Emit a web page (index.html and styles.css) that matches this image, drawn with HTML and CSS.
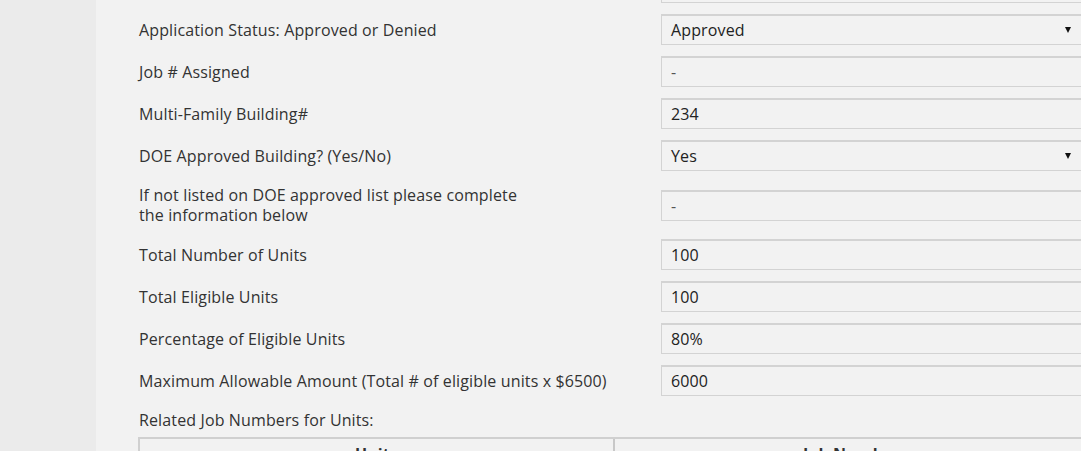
FILE: index.html
```html
<!DOCTYPE html>
<html lang="en">
<head>
<meta charset="utf-8">
<title>Application</title>
<link rel="stylesheet" href="styles.css">
</head>
<body>
<div class="page">
  <aside class="sidebar"></aside>
  <main class="panel">
    <div class="form">
      <div class="row top-row">
        <div class="label"></div>
        <div class="box box-tail"></div>
      </div>
      <div class="row">
        <div class="label">Application Status: Approved or Denied</div>
        <div class="box select"><span>Approved</span><span class="arrow"></span></div>
      </div>
      <div class="row">
        <div class="label">Job # Assigned</div>
        <div class="box"><span class="muted">-</span></div>
      </div>
      <div class="row">
        <div class="label">Multi-Family Building#</div>
        <div class="box"><span>234</span></div>
      </div>
      <div class="row">
        <div class="label">DOE Approved Building? (Yes/No)</div>
        <div class="box select"><span>Yes</span><span class="arrow"></span></div>
      </div>
      <div class="row">
        <div class="label">If not listed on DOE approved list please complete<br>the information below</div>
        <div class="box"><span class="muted">-</span></div>
      </div>
      <div class="row">
        <div class="label">Total Number of Units</div>
        <div class="box"><span>100</span></div>
      </div>
      <div class="row">
        <div class="label">Total Eligible Units</div>
        <div class="box"><span>100</span></div>
      </div>
      <div class="row">
        <div class="label">Percentage of Eligible Units</div>
        <div class="box"><span>80%</span></div>
      </div>
      <div class="row">
        <div class="label">Maximum Allowable Amount (Total # of eligible units x $6500)</div>
        <div class="box"><span>6000</span></div>
      </div>
      <div class="section-title">Related Job Numbers for Units:</div>
      <div class="table">
        <div class="th">Units</div>
        <div class="th">Job Number</div>
      </div>
    </div>
  </main>
</div>
</body>
</html>
```

FILE: styles.css
```css
html, body {
  margin: 0;
  padding: 0;
  height: 100%;
  overflow: hidden;
  background: #f2f2f2;
}
body {
  font-family: "Open Sans", "Noto Sans", sans-serif;
  font-size: 16px;
  letter-spacing: 0.13px;
  color: #333333;
}
.page {
  display: flex;
  height: 100%;
}
.sidebar {
  width: 96px;
  flex: none;
  background: #ebebeb;
}
.panel {
  flex: none;
  width: 1000px;
  background: #f2f2f2;
  padding-left: 42px;
}
.form {
  width: 948px;
  display: flex;
  flex-direction: column;
  gap: 11px;
}
.row {
  display: grid;
  grid-template-columns: 523px 425px;
  align-items: center;
}
.top-row {
  align-items: start;
}
.label {
  padding: 3px 0 3px 1px;
  line-height: 20px;
}
.top-row .label {
  padding: 0;
}
.box {
  box-sizing: border-box;
  height: 31px;
  border: 1px solid #d3d3d3;
  border-top-width: 2px;
  background: #f2f2f2;
  display: flex;
  align-items: center;
  justify-content: space-between;
  padding: 0 12px 0 9px;
  color: #222;
}
.box-tail {
  height: 3px;
  border-top: none;
}
.muted {
  color: #555;
}
.arrow {
  width: 0;
  height: 0;
  border-left: 3px solid transparent;
  border-right: 3px solid transparent;
  border-top: 6px solid #111;
  margin-right: 2px;
}
.section-title {
  padding: 3px 0 0 1px;
  line-height: 20px;
}
.table {
  display: grid;
  grid-template-columns: 473px 475px;
  border: 2px solid #d0d0d0;
  border-bottom: none;
  margin-top: -4px;
}
.th {
  font-weight: 700;
  text-align: center;
  padding: 4px 0;
  line-height: 22px;
  color: #333;
}
.th + .th {
  border-left: 2px solid #c8c8c8;
}
```
